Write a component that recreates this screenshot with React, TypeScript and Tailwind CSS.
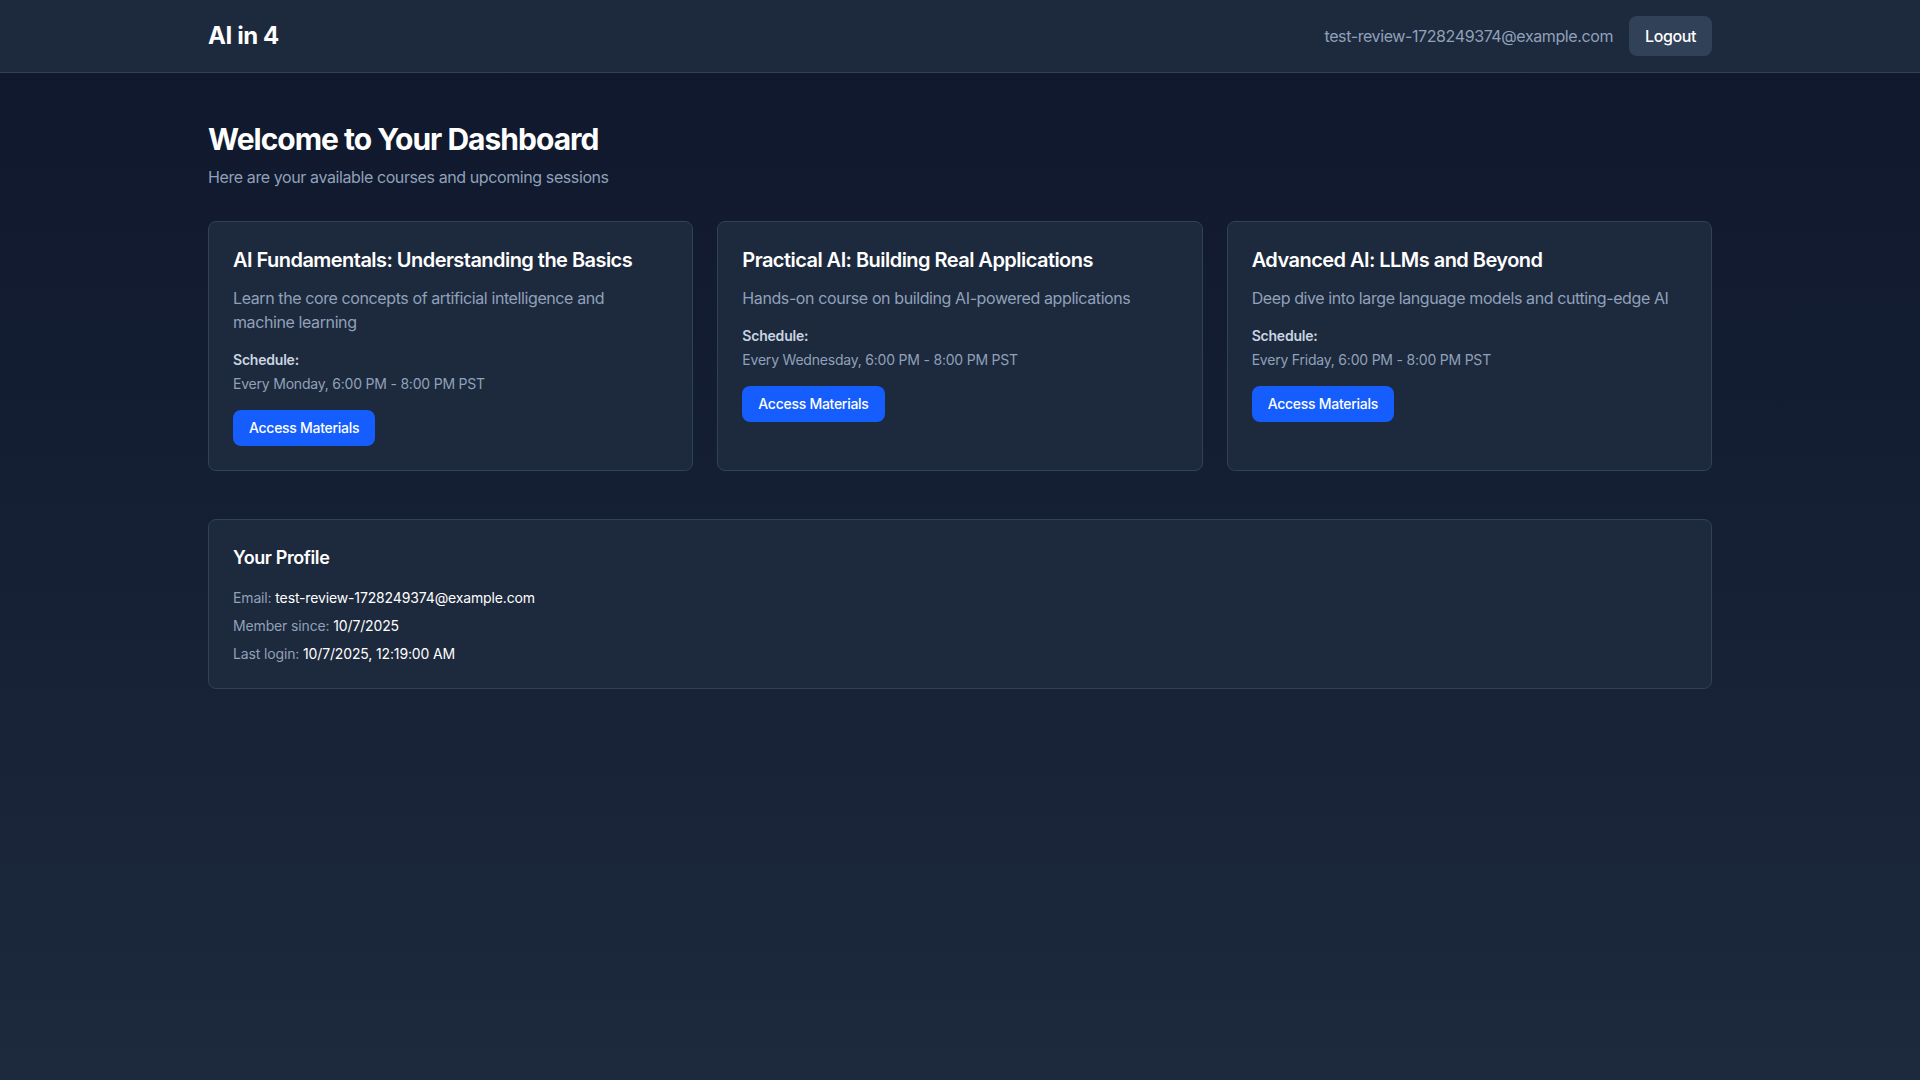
import { useState } from 'react';

const courses = [
  {
    id: 1,
    title: 'AI Fundamentals: Understanding the Basics',
    description: 'Learn the core concepts of artificial intelligence and machine learning',
    schedule: 'Every Monday, 6:00 PM - 8:00 PM PST',
  },
  {
    id: 2,
    title: 'Practical AI: Building Real Applications',
    description: 'Hands-on course on building AI-powered applications',
    schedule: 'Every Wednesday, 6:00 PM - 8:00 PM PST',
  },
  {
    id: 3,
    title: 'Advanced AI: LLMs and Beyond',
    description: 'Deep dive into large language models and cutting-edge AI',
    schedule: 'Every Friday, 6:00 PM - 8:00 PM PST',
  },
];

export default function App() {
  const [user] = useState({
    email: 'test-review-1728249374@example.com',
    createdAt: '10/7/2025',
    lastLogin: '10/7/2025, 12:19:00 AM',
  });

  return (
    <div className="min-h-screen bg-linear-to-b from-slate-900 to-slate-800 font-['Inter','Noto_Sans',sans-serif] tracking-tight text-white">
      <header className="bg-slate-800 border-b border-slate-700">
        <div className="max-w-screen-2xl mx-auto px-4 py-4 flex justify-between items-center">
          <h1 className="text-2xl font-bold text-white">AI in 4</h1>
          <div className="flex items-center gap-4">
            <span className="text-slate-400">{user.email}</span>
            <button className="px-4 py-2 bg-slate-700 text-white font-medium rounded-lg hover:bg-slate-600">Logout</button>
          </div>
        </div>
      </header>

      <main className="max-w-screen-2xl mx-auto px-4 pt-12 pb-12">
        <div className="mb-8">
          <h2 className="text-3xl font-bold tracking-[-0.033em] text-white">Welcome to Your Dashboard</h2>
          <p className="mt-2 text-slate-400">Here are your available courses and upcoming sessions</p>
        </div>

        <div className="grid grid-cols-3 gap-6 mb-12">
          {courses.map((course) => (
            <div key={course.id} className="bg-slate-800 rounded-lg border border-slate-700 p-6">
              <h3 className="text-xl font-semibold tracking-[-0.027em] text-white mb-3">{course.title}</h3>
              <p className="text-slate-400 mb-4">{course.description}</p>
              <div className="text-sm tracking-[-0.015em]">
                <p className="font-semibold text-slate-300">Schedule:</p>
                <p className="mt-1 text-slate-400">{course.schedule}</p>
              </div>
              <button className="mt-4 px-4 py-2 bg-blue-600 text-white text-sm tracking-[-0.02em] font-medium rounded-lg hover:bg-blue-700">Access Materials</button>
            </div>
          ))}
        </div>

        <div className="bg-slate-800 rounded-lg border border-slate-700 p-6">
          <h3 className="text-lg font-semibold text-white mb-4">Your Profile</h3>
          <div className="space-y-2 text-sm tracking-[-0.01em]">
            <p className="text-slate-400">Email: <span className="text-white">{user.email}</span></p>
            <p className="text-slate-400">Member since: <span className="text-white">{user.createdAt}</span></p>
            <p className="text-slate-400">Last login: <span className="text-white">{user.lastLogin}</span></p>
          </div>
        </div>
      </main>
    </div>
  );
}
